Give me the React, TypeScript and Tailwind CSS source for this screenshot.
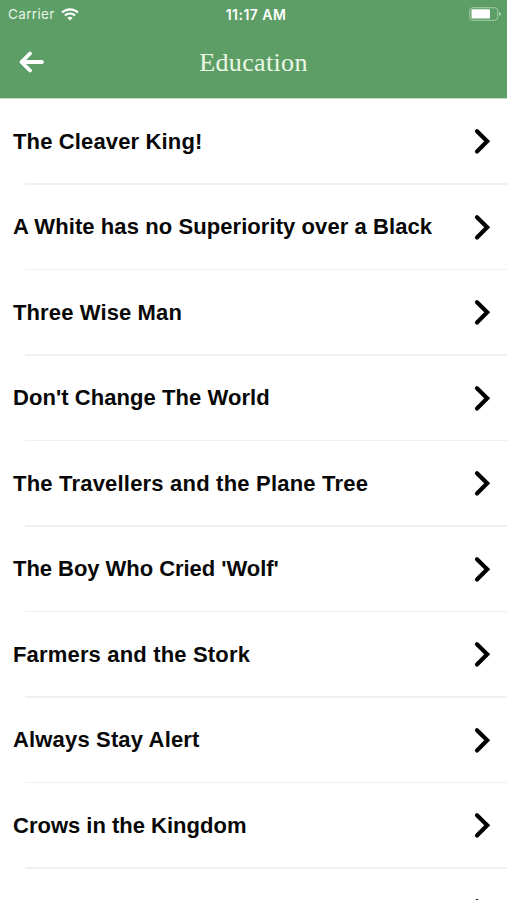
import clsx from "clsx";

const stories = [
  { title: "The Cleaver King!", tracking: "tracking-[0.140px]" },
  { title: "A White has no Superiority over a Black", tracking: "tracking-[0.080px]" },
  { title: "Three Wise Man", tracking: "tracking-[0.120px]" },
  { title: "Don't Change The World", tracking: "tracking-[0.060px]" },
  { title: "The Travellers and the Plane Tree", tracking: "tracking-[0.200px]" },
  { title: "The Boy Who Cried 'Wolf'", tracking: "tracking-[-0.040px]" },
  { title: "Farmers and the Stork", tracking: "tracking-[0.170px]" },
  { title: "Always Stay Alert", tracking: "tracking-[0.160px]" },
  { title: "Crows in the Kingdom", tracking: "tracking-[0px]" },
  { title: "", tracking: "tracking-[0px]" },
];

function WifiIcon() {
  return (
    <svg className="h-[13px] w-[18px]" viewBox="0 0 18 13" fill="none" stroke="currentColor">
      <path d="M1 4.500C5.500 0.200 12.500 0.200 17 4.500" strokeWidth="2.300" />
      <path d="M3.900 7.500C6.800 4.800 11.200 4.800 14.100 7.500" strokeWidth="2.200" />
      <path d="M6.300 9.800C7.800 8.400 10.200 8.400 11.700 9.800L9 12.500Z" fill="currentColor" stroke="none" />
    </svg>
  );
}

function BatteryIcon() {
  return (
    <svg className="h-[14px] w-[33px]" viewBox="0 0 33 14" fill="none">
      <rect x="0.700" y="0.700" width="28" height="12.600" rx="3" stroke="#a4cda9" strokeWidth="1" />
      <rect x="2.500" y="2.300" width="18.500" height="9.200" rx="1" fill="white" />
      <path d="M30 5v4c1.300-.4 2-1.100 2-2s-.7-1.600-2-2Z" fill="#a4cda9" />
    </svg>
  );
}

function BackIcon() {
  return (
    <svg
      className="h-[22px] w-[26px]"
      viewBox="0 0 26 22"
      fill="none"
      stroke="currentColor"
      strokeWidth="3.800"
      strokeLinecap="round"
      strokeLinejoin="round"
    >
      <path d="M12 2.500L3.500 11L12 19.500" />
      <path d="M4 11H24" />
    </svg>
  );
}

function ChevronIcon() {
  return (
    <svg
      className="h-[28px] w-[18px] shrink-0"
      viewBox="0 0 18 28"
      fill="none"
      stroke="currentColor"
      strokeWidth="4.200"
      strokeLinecap="round"
    >
      <path d="M4 4.200L14.200 14.300L4 24.400" strokeLinejoin="miter" />
    </svg>
  );
}

function StatusBar() {
  return (
    <div className="grid h-7 grid-cols-3 items-center text-[13.500px] leading-none text-white">
      <div className="flex items-center gap-[6px] pl-[8px]">
        <span className="pt-px tracking-[0.350px] text-[#e6f5e6]">Carrier</span>
        <WifiIcon />
      </div>
      <span className="pt-px pl-[5px] text-center text-[14px] font-semibold tracking-[0.450px]">11:17 AM</span>
      <div className="flex justify-end pr-[5px]">
        <BatteryIcon />
      </div>
    </div>
  );
}

export default function App() {
  return (
    <div className="h-[900px] w-full overflow-hidden bg-white font-['Inter',sans-serif]">
      <header className="h-[99px] border-b border-[#c5dcc8] bg-[#5d9e66]">
        <StatusBar />
        <div className="grid h-[68px] grid-cols-[60px_1fr_60px] items-center">
          <button className="pl-[18px] text-white" aria-label="Back">
            <BackIcon />
          </button>
          <h1 className="pt-px text-center font-['Liberation_Serif',serif] text-[26px] leading-none tracking-[0.350px] text-[#ecf8e6]">
            Education
          </h1>
        </div>
      </header>

      <ul>
        {stories.map((story, i) => (
          <li key={i} className="flex h-[85.550px] flex-col">
            <div className="flex flex-1 items-center justify-between pr-[16px] pl-[13px]">
              <span
                className={clsx(
                  "font-['Liberation_Sans',sans-serif] text-[22px] font-bold whitespace-nowrap text-[#080808]",
                  story.tracking
                )}
              >
                {story.title}
              </span>
              <ChevronIcon />
            </div>
            <div className="ml-[25px] h-[1.500px] bg-[#f0f0f0]" />
          </li>
        ))}
      </ul>
    </div>
  );
}
